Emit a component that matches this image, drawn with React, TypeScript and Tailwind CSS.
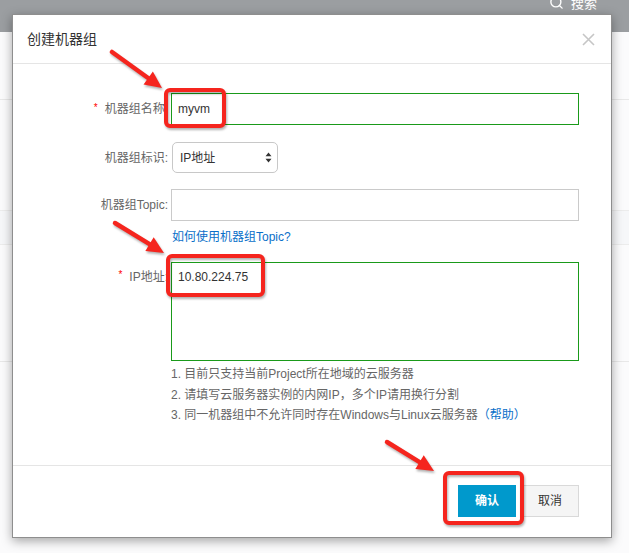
import { Search } from 'lucide-react'

const RED = '#f5251e'

// red annotation arrow, tail -> tip
function Arrow({ x1, y1, x2, y2 }: { x1: number; y1: number; x2: number; y2: number }) {
  const len = Math.hypot(x2 - x1, y2 - y1)
  const ux = (x2 - x1) / len
  const uy = (y2 - y1) / len
  const bx = x2 - ux * 17
  const by = y2 - uy * 17
  const pts = [
    [x2, y2],
    [bx - uy * 8, by + ux * 8],
    [bx + uy * 8, by - ux * 8],
  ].map(p => p.join(',')).join(' ')
  return (
    <g>
      <line x1={x1} y1={y1} x2={bx + ux * 2} y2={by + uy * 2}
        stroke={RED} strokeWidth={4.5} strokeLinecap="round" />
      <polygon points={pts} fill={RED} />
    </g>
  )
}

function Required() {
  return <span className="relative -top-[2px] mr-[7px] text-[10px] text-[#f00]">*</span>
}

export default function App() {
  return (
    <div className="relative w-[629px] h-[553px] overflow-hidden bg-[#fbfbfc] font-['Liberation_Sans','Noto_Sans_CJK_SC',sans-serif]">

      {/* page behind the dialog */}
      <div className="h-8 bg-[#9b9ea1] flex justify-end pr-[32px]">
        <div className="flex items-start gap-[7px] -mt-[4px] text-white text-[13px] leading-[16px]">
          <Search size={15} strokeWidth={2.2} className="-mt-[1px]" />
          <span>搜索</span>
        </div>
      </div>
      <div className="h-[68px] border-b border-[#e8e8e8]" />
      <div className="h-[110px]" />
      <div className="h-[35px] bg-[#f6f7f9] border-y border-[#ececec]" />
      <div className="h-[117px] border-b border-[#e8e8e8]" />

      {/* dialog */}
      <div className="absolute left-[12px] top-[14px] w-[600px] h-[524px] bg-white border border-[#8e8e8e] shadow-[0_3px_10px_rgba(0,0,0,0.35)] flex flex-col">
        <div className="h-[49px] shrink-0 border-b border-[#e5e5e5] flex items-center justify-between pl-[14px] pr-[16px]">
          <h3 className="text-[14px] text-[#333]">创建机器组</h3>
          <svg width="13" height="13" viewBox="0 0 13 13">
            <path d="M1 1 12 12 M12 1 1 12" stroke="#c6c6c6" strokeWidth="1.6" />
          </svg>
        </div>

        <div className="flex-1 pt-[29px] text-[12px]">
          <div className="flex">
            <div className="w-[155px] h-8 flex items-center justify-end text-[#666]">
              <Required />机器组名称:
            </div>
            <div className="ml-[3px] w-[408px] h-8 border border-[#1a9a1a] flex items-center px-[6px] text-[#333]">
              myvm
            </div>
          </div>

          <div className="flex mt-[17px]">
            <div className="w-[155px] h-[31px] flex items-center justify-end text-[#666]">
              机器组标识:
            </div>
            <div className="ml-[4px] w-[106px] h-[31px] rounded-[5px] border border-[#c8c8c8] flex items-center justify-between pl-[7px] pr-[5px] text-[#333]">
              <span>IP地址</span>
              <svg width="7" height="11" viewBox="0 0 7 11">
                <path d="M3.5 0.5 6.5 4.2H0.5Z M3.5 10.5 6.5 6.8H0.5Z" fill="#333" />
              </svg>
            </div>
          </div>

          <div className="flex mt-[16px]">
            <div className="w-[155px] h-8 flex items-center justify-end text-[#666]">
              机器组Topic:
            </div>
            <div className="ml-[3px] w-[408px] h-8 border border-[#cacaca]" />
          </div>

          <div className="mt-[8px] ml-[159px] leading-4 text-[#0a6fc9]">如何使用机器组Topic?</div>

          <div className="flex mt-[17px]">
            <div className="w-[155px] pt-[7px] leading-4 flex justify-end text-[#666]">
              <Required />IP地址:
            </div>
            <div className="ml-[3px] w-[408px] h-[99px] border border-[#1a9a1a] pl-[6px] pt-[6px] leading-4 text-[#333]">
              10.80.224.75
            </div>
          </div>

          <div className="mt-[3px] ml-[158px] leading-[20.5px] text-[#666]">
            <p>1. 目前只支持当前Project所在地域的云服务器</p>
            <p>2. 请填写云服务器实例的内网IP，多个IP请用换行分割</p>
            <p>3. 同一机器组中不允许同时存在Windows与Linux云服务器<span className="text-[#0a6fc9]">（帮助）</span></p>
          </div>
        </div>

        <div className="h-[72px] shrink-0 border-t border-[#e5e5e5] flex justify-end items-start gap-[5px] pt-[19px] pr-[32px] text-[12px]">
          <button className="w-[58px] h-8 bg-[#0099cc] text-white font-bold">确认</button>
          <button className="w-[58px] h-8 bg-[#f5f5f5] border border-[#d9d9d9] text-[#333]">取消</button>
        </div>
      </div>

      {/* red annotations */}
      <svg className="absolute inset-0 pointer-events-none drop-shadow-[1px_2px_1px_rgba(0,0,0,0.3)]" width="629" height="553">
        <rect x="166" y="90" width="58" height="36" rx="4" fill="none" stroke={RED} strokeWidth="4" />
        <rect x="168" y="256" width="95" height="39" rx="4" fill="none" stroke={RED} strokeWidth="4" />
        <rect x="445" y="473" width="77" height="50" rx="4" fill="none" stroke={RED} strokeWidth="4" />
        <Arrow x1={112} y1={52} x2={162} y2={88} />
        <Arrow x1={115} y1={223} x2={164} y2={253} />
        <Arrow x1={387} y1={442} x2={434} y2={471} />
      </svg>
    </div>
  )
}
